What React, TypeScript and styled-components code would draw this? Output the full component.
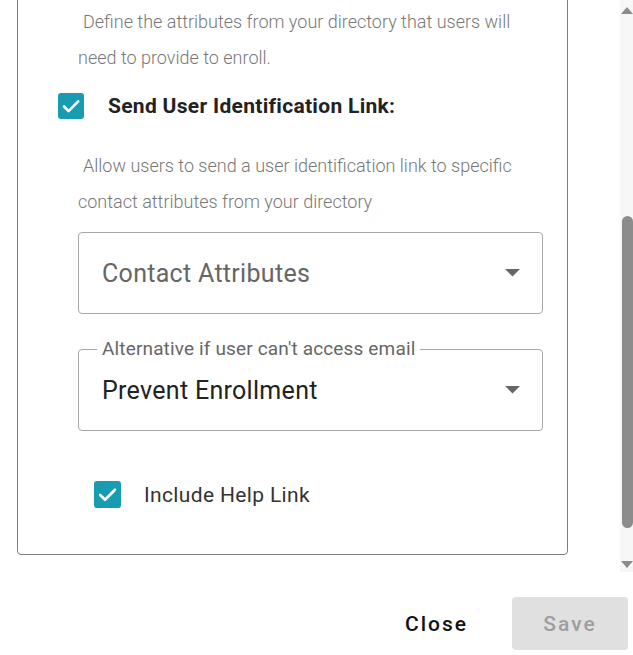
import React, { useLayoutEffect, useRef } from "react";
import styled, { createGlobalStyle } from "styled-components";

const Global = createGlobalStyle`
  html, body { margin: 0; padding: 0; background: #fff; }
  body { font-family: Roboto, "Noto Sans", Arial, sans-serif; }
  * { box-sizing: border-box; }
`;

const Dialog = styled.div`
  width: 633px;
  height: 655px;
  display: flex;
  flex-direction: column;
  background: #fff;
`;

const Body = styled.div`
  height: 572px;
  flex: none;
  display: flex;
`;

const Scroller = styled.div`
  flex: 1;
  min-width: 0;
  overflow-y: scroll;
  padding: 17px 52px 17px 17px;
  scrollbar-width: none;
  &::-webkit-scrollbar { display: none; }
`;

const Track = styled.div`
  width: 13px;
  flex: none;
  background: #f7f7f7;
  display: flex;
  flex-direction: column;
  align-items: flex-end;
`;

const TrackArrow = styled.div<{ $down?: boolean }>`
  height: 15px;
  width: 13px;
  flex: none;
  display: flex;
  justify-content: center;
  align-items: ${(p) => (p.$down ? "flex-start" : "flex-end")};
  padding: ${(p) => (p.$down ? "4px 0 0 1px" : "0 0 1px 1px")};
`;

const Rail = styled.div`
  flex: 1;
  width: 13px;
  display: flex;
  flex-direction: column;
  align-items: flex-end;
`;

const Thumb = styled.div<{ $top: number; $height: number }>`
  margin-top: ${(p) => p.$top}px;
  height: ${(p) => p.$height}px;
  width: 11px;
  border-radius: 6px;
  background: #8c8c8c;
`;

const Card = styled.div`
  border: 1px solid #7d7d7d;
  border-radius: 4px;
  padding: 20px 24px 46px 40px;
  display: flex;
  flex-direction: column;
`;

const CheckRow = styled.label<{ $indent?: number; $top?: number; $gap?: number }>`
  display: flex;
  align-items: center;
  gap: ${(p) => p.$gap ?? 24}px;
  margin-left: ${(p) => p.$indent ?? 0}px;
  margin-top: ${(p) => p.$top ?? 0}px;
  height: 27px;
`;

const CheckLabel = styled.span<{ $bold?: boolean }>`
  font-size: 21px;
  font-weight: ${(p) => (p.$bold ? 700 : 400)};
  color: ${(p) => (p.$bold ? "#222" : "#333")};
  letter-spacing: ${(p) => (p.$bold ? 0.3 : 0.35)}px;
`;

const Desc = styled.p<{ $top?: number }>`
  margin: ${(p) => p.$top ?? 29}px 0 0 20px;
  font-size: 18px;
  font-weight: 300;
  line-height: 36px;
  color: #777;
  text-indent: 5px;
`;

const SelectBox = styled.div<{ $top: number; $filled?: boolean }>`
  position: relative;
  margin: ${(p) => p.$top}px 0 0 20px;
  height: 82px;
  border: 1px solid #a8a8a8;
  border-radius: 4px;
  display: flex;
  align-items: center;
  justify-content: space-between;
  padding: 0 22px 0 23px;
  font-size: 25px;
  letter-spacing: 0.3px;
  color: ${(p) => (p.$filled ? "#222" : "#666")};
`;

const FloatLabel = styled.span`
  position: absolute;
  top: -12px;
  left: 18px;
  padding: 0 5px;
  background: #fff;
  font-size: 19px;
  letter-spacing: 0.15px;
  color: #666;
  line-height: 22px;
`;

const Footer = styled.div`
  flex: 1;
  display: flex;
  justify-content: flex-end;
  align-items: flex-start;
  gap: 22px;
  padding: 25px 5px 0 0;
`;

const Button = styled.button<{ $variant: "text" | "disabled" }>`
  height: 53px;
  border: none;
  border-radius: 4px;
  font-family: Roboto, Arial, sans-serif;
  font-size: 21px;
  font-weight: 500;
  letter-spacing: 2px;
  padding: 0 22px;
  background: ${(p) => (p.$variant === "disabled" ? "#e0e0e0" : "transparent")};
  color: ${(p) => (p.$variant === "disabled" ? "#9e9e9e" : "#111")};
  width: ${(p) => (p.$variant === "disabled" ? "116px" : "auto")};
  cursor: pointer;
`;

const Check = ({ size = 26 }: { size?: number }) => (
  <svg width={size} height={size} viewBox="0 0 26 26" aria-hidden>
    <rect x="0" y="0" width="26" height="26" rx="3" fill="#189cb2" />
    <path d="M6 13.5l4.6 4.6L20.2 8.4" fill="none" stroke="#fff" strokeWidth="2.6" strokeLinecap="round" strokeLinejoin="round" />
  </svg>
);

const Arrow = () => (
  <svg width="15" height="8" viewBox="0 0 15 8" aria-hidden>
    <path d="M0 0h15L7.5 7.5z" fill="#666" />
  </svg>
);

const TrackTriangle = ({ down }: { down?: boolean }) => (
  <svg width="12" height="7" viewBox="0 0 12 7" aria-hidden>
    <path d={down ? "M0 0h12L6 7z" : "M0 7h12L6 0z"} fill="#8c8c8c" />
  </svg>
);

export default function App() {
  const ref = useRef<HTMLDivElement>(null);
  useLayoutEffect(() => {
    if (ref.current) ref.current.scrollTop = ref.current.scrollHeight;
  }, []);
  return (
    <>
      <Global />
      <Dialog>
        <Body>
          <Scroller ref={ref}>
            <Card>
              <CheckRow>
                <Check />
                <CheckLabel $bold>Send Enrollment Email:</CheckLabel>
              </CheckRow>
              <Desc>Send an enrollment email to the primary email address of each user</Desc>
              <SelectBox $top={12}>
                Email Attribute
                <Arrow />
              </SelectBox>
              <CheckRow $top={35}>
                <Check />
                <CheckLabel $bold>Require Directory Attributes:</CheckLabel>
              </CheckRow>
              <Desc>Define the attributes from your directory that users will need to provide to enroll.</Desc>
              <CheckRow $top={16}>
                <Check />
                <CheckLabel $bold>Send User Identification Link:</CheckLabel>
              </CheckRow>
              <Desc>Allow users to send a user identification link to specific contact attributes from your directory</Desc>
              <SelectBox $top={12}>
                Contact Attributes
                <Arrow />
              </SelectBox>
              <SelectBox $top={35} $filled>
                <FloatLabel>Alternative if user can't access email</FloatLabel>
                Prevent Enrollment
                <Arrow />
              </SelectBox>
              <CheckRow $top={50} $indent={36} $gap={23}>
                <Check size={27} />
                <CheckLabel>Include Help Link</CheckLabel>
              </CheckRow>
            </Card>
          </Scroller>
          <Track>
            <TrackArrow>
              <TrackTriangle />
            </TrackArrow>
            <Rail>
              <Thumb $top={201} $height={312} />
            </Rail>
            <TrackArrow $down>
              <TrackTriangle down />
            </TrackArrow>
          </Track>
        </Body>
        <Footer>
          <Button $variant="text">Close</Button>
          <Button $variant="disabled" disabled>
            Save
          </Button>
        </Footer>
      </Dialog>
    </>
  );
}
